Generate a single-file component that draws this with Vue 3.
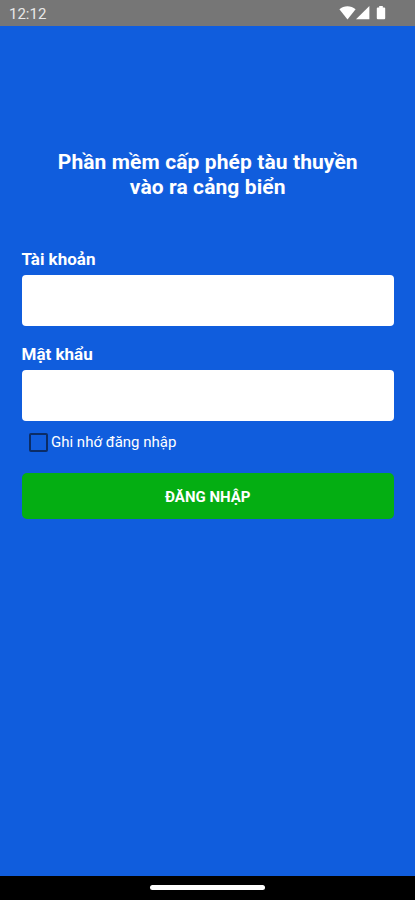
<template>
  <div class="screen">
    <header class="status-bar">
      <span class="clock">12:12</span>
      <svg class="status-icons" width="50" height="16" viewBox="0 0 50 16">
        <path d="M0.4 4.2 C4.8 0.2 12 0.2 16.6 4.2 L8.5 14.4 Z" />
        <path d="M30.4 1 V14.3 H17 Z" />
        <path d="M40.2 1 H43.8 V2.4 H45.2 Q46.2 2.4 46.2 3.4 V13.2 Q46.2 14.2 45.2 14.2 H38.8 Q37.8 14.2 37.8 13.2 V3.4 Q37.8 2.4 38.8 2.4 H40.2 Z" />
      </svg>
    </header>

    <main class="content">
      <h1 class="title">Phần mềm cấp phép tàu thuyền<br />vào ra cảng biển</h1>

      <form class="login-form" @submit.prevent>
        <label class="label" for="username">Tài khoản</label>
        <input id="username" v-model="username" type="text" class="input" />

        <label class="label" for="password">Mật khẩu</label>
        <input id="password" v-model="password" type="password" class="input" />

        <label class="remember">
          <input v-model="remember" type="checkbox" class="checkbox" />
          <span class="remember-text">Ghi nhớ đăng nhập</span>
        </label>

        <button type="submit" class="btn-login">ĐĂNG NHẬP</button>
      </form>
    </main>

    <footer class="nav-bar">
      <div class="nav-handle"></div>
    </footer>
  </div>
</template>

<script setup>
import { ref } from 'vue'

const username = ref('')
const password = ref('')
const remember = ref(false)
</script>

<style>
body {
  margin: 0;
}
</style>

<style scoped>
.screen {
  display: flex;
  flex-direction: column;
  height: 100vh;
  background: #105ddd;
  color: #fff;
  font-family: Roboto, sans-serif;
}

.status-bar {
  display: flex;
  justify-content: space-between;
  height: 26px;
  padding: 0 26px 0 9px;
  background: #767676;
}

.clock {
  font-size: 15px;
  line-height: 28px;
  color: #e8e8e8;
}

.status-icons {
  margin-top: 5px;
  fill: #fff;
}

.content {
  flex: 1;
  padding: 124px 21px 0 21.5px;
}

.title {
  margin: 0;
  font-size: 21px;
  font-weight: 700;
  line-height: 25px;
  letter-spacing: 0.1px;
  text-align: center;
}

.login-form {
  display: flex;
  flex-direction: column;
  padding-top: 49px;
}

.label {
  height: 20px;
  margin-bottom: 6px;
  font-size: 17px;
  font-weight: 700;
  line-height: 20px;
}

.input {
  box-sizing: border-box;
  width: 100%;
  height: 51px;
  margin: 0 0 18px;
  padding: 0 12px;
  border: none;
  border-radius: 4px;
  background: #fff;
  font-size: 16px;
  outline: none;
}

.remember {
  display: flex;
  align-items: center;
  height: 20px;
  margin-top: -7px;
  padding-left: 7.5px;
  font-size: 15px;
}

.checkbox {
  appearance: none;
  box-sizing: border-box;
  width: 19px;
  height: 19px;
  margin: 0 3px 0 0;
  border: 2px solid #0b2c66;
  border-radius: 2px;
}

.checkbox:checked {
  background: #0b2c66;
}

.btn-login {
  height: 46px;
  margin-top: 21px;
  padding: 1px 0 0;
  border: none;
  border-radius: 5px;
  background: #04ae12;
  color: #fff;
  font-family: inherit;
  font-size: 15px;
  font-weight: 700;
}

.nav-bar {
  display: flex;
  justify-content: center;
  height: 24px;
  background: #000;
}

.nav-handle {
  width: 115px;
  height: 5px;
  margin-top: 9px;
  border-radius: 3px;
  background: #fff;
}
</style>
